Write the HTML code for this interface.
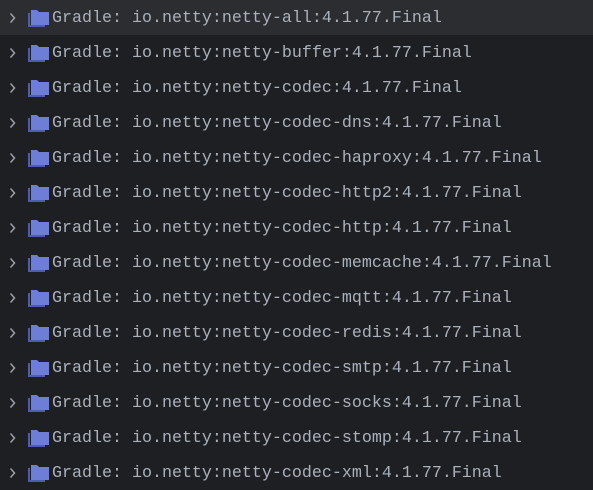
<!DOCTYPE html>
<html><head><style>
body{margin:0;width:593px;height:487px;background:#1e1f22;overflow:hidden;font-family:"Liberation Mono",monospace;}
.r{position:relative;height:35px;}
.r.s{background:#2b2d30;}
.r svg{position:absolute;left:0;top:0;}
.t{position:absolute;left:52px;top:9px;font-size:16.67px;line-height:20px;color:#aab1bb;white-space:pre;}
</style></head><body>
<div class="r s"><svg width="50" height="35"><path d="M10.5 13.5l4 4.5-4 4.5" fill="none" stroke="#9da0a8" stroke-width="1.5"/><path d="M28 13v14h17v-2H30V13z" fill="#4f5dad"/><path d="M31 10h6l2 2h10v13H31z" fill="#6e7ed6"/></svg><div class="t">Gradle: io.netty:netty-all:4.1.77.Final</div></div>
<div class="r"><svg width="50" height="35"><path d="M10.5 13.5l4 4.5-4 4.5" fill="none" stroke="#9da0a8" stroke-width="1.5"/><path d="M28 13v14h17v-2H30V13z" fill="#4f5dad"/><path d="M31 10h6l2 2h10v13H31z" fill="#6e7ed6"/></svg><div class="t">Gradle: io.netty:netty-buffer:4.1.77.Final</div></div>
<div class="r"><svg width="50" height="35"><path d="M10.5 13.5l4 4.5-4 4.5" fill="none" stroke="#9da0a8" stroke-width="1.5"/><path d="M28 13v14h17v-2H30V13z" fill="#4f5dad"/><path d="M31 10h6l2 2h10v13H31z" fill="#6e7ed6"/></svg><div class="t">Gradle: io.netty:netty-codec:4.1.77.Final</div></div>
<div class="r"><svg width="50" height="35"><path d="M10.5 13.5l4 4.5-4 4.5" fill="none" stroke="#9da0a8" stroke-width="1.5"/><path d="M28 13v14h17v-2H30V13z" fill="#4f5dad"/><path d="M31 10h6l2 2h10v13H31z" fill="#6e7ed6"/></svg><div class="t">Gradle: io.netty:netty-codec-dns:4.1.77.Final</div></div>
<div class="r"><svg width="50" height="35"><path d="M10.5 13.5l4 4.5-4 4.5" fill="none" stroke="#9da0a8" stroke-width="1.5"/><path d="M28 13v14h17v-2H30V13z" fill="#4f5dad"/><path d="M31 10h6l2 2h10v13H31z" fill="#6e7ed6"/></svg><div class="t">Gradle: io.netty:netty-codec-haproxy:4.1.77.Final</div></div>
<div class="r"><svg width="50" height="35"><path d="M10.5 13.5l4 4.5-4 4.5" fill="none" stroke="#9da0a8" stroke-width="1.5"/><path d="M28 13v14h17v-2H30V13z" fill="#4f5dad"/><path d="M31 10h6l2 2h10v13H31z" fill="#6e7ed6"/></svg><div class="t">Gradle: io.netty:netty-codec-http2:4.1.77.Final</div></div>
<div class="r"><svg width="50" height="35"><path d="M10.5 13.5l4 4.5-4 4.5" fill="none" stroke="#9da0a8" stroke-width="1.5"/><path d="M28 13v14h17v-2H30V13z" fill="#4f5dad"/><path d="M31 10h6l2 2h10v13H31z" fill="#6e7ed6"/></svg><div class="t">Gradle: io.netty:netty-codec-http:4.1.77.Final</div></div>
<div class="r"><svg width="50" height="35"><path d="M10.5 13.5l4 4.5-4 4.5" fill="none" stroke="#9da0a8" stroke-width="1.5"/><path d="M28 13v14h17v-2H30V13z" fill="#4f5dad"/><path d="M31 10h6l2 2h10v13H31z" fill="#6e7ed6"/></svg><div class="t">Gradle: io.netty:netty-codec-memcache:4.1.77.Final</div></div>
<div class="r"><svg width="50" height="35"><path d="M10.5 13.5l4 4.5-4 4.5" fill="none" stroke="#9da0a8" stroke-width="1.5"/><path d="M28 13v14h17v-2H30V13z" fill="#4f5dad"/><path d="M31 10h6l2 2h10v13H31z" fill="#6e7ed6"/></svg><div class="t">Gradle: io.netty:netty-codec-mqtt:4.1.77.Final</div></div>
<div class="r"><svg width="50" height="35"><path d="M10.5 13.5l4 4.5-4 4.5" fill="none" stroke="#9da0a8" stroke-width="1.5"/><path d="M28 13v14h17v-2H30V13z" fill="#4f5dad"/><path d="M31 10h6l2 2h10v13H31z" fill="#6e7ed6"/></svg><div class="t">Gradle: io.netty:netty-codec-redis:4.1.77.Final</div></div>
<div class="r"><svg width="50" height="35"><path d="M10.5 13.5l4 4.5-4 4.5" fill="none" stroke="#9da0a8" stroke-width="1.5"/><path d="M28 13v14h17v-2H30V13z" fill="#4f5dad"/><path d="M31 10h6l2 2h10v13H31z" fill="#6e7ed6"/></svg><div class="t">Gradle: io.netty:netty-codec-smtp:4.1.77.Final</div></div>
<div class="r"><svg width="50" height="35"><path d="M10.5 13.5l4 4.5-4 4.5" fill="none" stroke="#9da0a8" stroke-width="1.5"/><path d="M28 13v14h17v-2H30V13z" fill="#4f5dad"/><path d="M31 10h6l2 2h10v13H31z" fill="#6e7ed6"/></svg><div class="t">Gradle: io.netty:netty-codec-socks:4.1.77.Final</div></div>
<div class="r"><svg width="50" height="35"><path d="M10.5 13.5l4 4.5-4 4.5" fill="none" stroke="#9da0a8" stroke-width="1.5"/><path d="M28 13v14h17v-2H30V13z" fill="#4f5dad"/><path d="M31 10h6l2 2h10v13H31z" fill="#6e7ed6"/></svg><div class="t">Gradle: io.netty:netty-codec-stomp:4.1.77.Final</div></div>
<div class="r"><svg width="50" height="35"><path d="M10.5 13.5l4 4.5-4 4.5" fill="none" stroke="#9da0a8" stroke-width="1.5"/><path d="M28 13v14h17v-2H30V13z" fill="#4f5dad"/><path d="M31 10h6l2 2h10v13H31z" fill="#6e7ed6"/></svg><div class="t">Gradle: io.netty:netty-codec-xml:4.1.77.Final</div></div>
</body></html>
